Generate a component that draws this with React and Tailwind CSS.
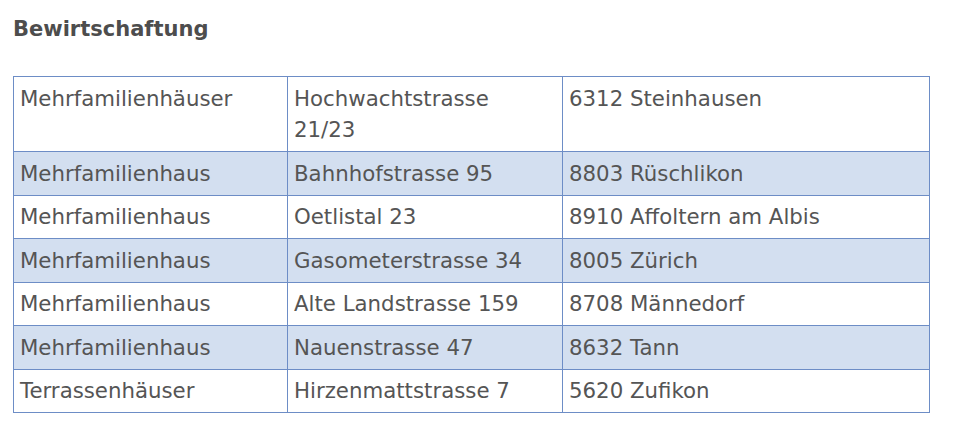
import React from "react";

const rows = [
  ["Mehrfamilienhäuser", "Hochwachtstrasse 21/23", "6312 Steinhausen"],
  ["Mehrfamilienhaus", "Bahnhofstrasse 95", "8803 Rüschlikon"],
  ["Mehrfamilienhaus", "Oetlistal 23", "8910 Affoltern am Albis"],
  ["Mehrfamilienhaus", "Gasometerstrasse 34", "8005 Zürich"],
  ["Mehrfamilienhaus", "Alte Landstrasse 159", "8708 Männedorf"],
  ["Mehrfamilienhaus", "Nauenstrasse 47", "8632 Tann"],
  ["Terrassenhäuser", "Hirzenmattstrasse 7", "5620 Zufikon"],
];

export default function App() {
  return (
    <div
      className="w-[960px] h-[424px] bg-white overflow-hidden pl-[13px] pt-[17px]"
      style={{ fontFamily: '"DejaVu Sans", Verdana, sans-serif' }}
    >
      <h2 className="text-[21px] leading-[24px] font-bold text-[#4d4d4d]">
        Bewirtschaftung
      </h2>
      <table className="mt-[35px] w-[917px] border-collapse border border-[#6d8dc6] table-fixed text-[21.3px] leading-[31.5px] text-[#555555]">
        <colgroup>
          <col className="w-[274px]" />
          <col className="w-[275px]" />
          <col />
        </colgroup>
        <tbody>
          {rows.map((r, i) => (
            <tr key={i} className={i % 2 === 1 ? "bg-[#d3dff0]" : "bg-white"}>
              {r.map((c, j) => (
                <td
                  key={j}
                  className="border border-[#6d8dc6] pl-[6px] pr-[10px] py-[5.5px] align-top"
                >
                  {c}
                </td>
              ))}
            </tr>
          ))}
        </tbody>
      </table>
    </div>
  );
}
